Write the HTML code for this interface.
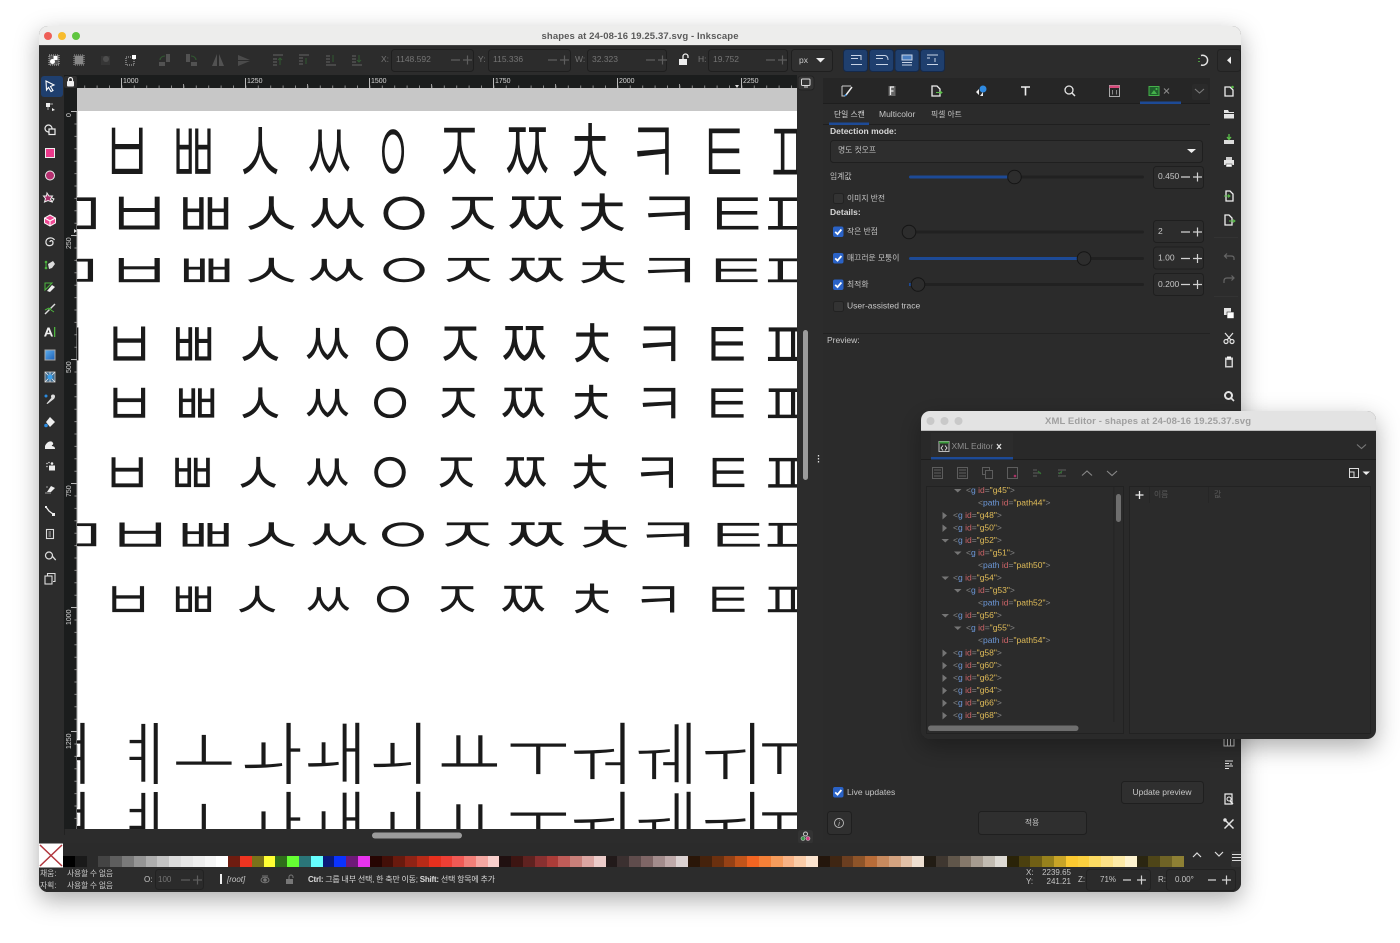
<!DOCTYPE html>
<html><head><meta charset="utf-8"><title>shapes at 24-08-16 19.25.37.svg - Inkscape</title>
<style>
html,body{margin:0;padding:0;background:#fff;width:1400px;height:943px;overflow:hidden}
svg{display:block;position:absolute;left:0;top:0;font-family:"Liberation Sans","Noto Sans CJK KR",sans-serif;font-size:8.5px;filter:blur(.25px)}
#pal{position:absolute;left:63px;top:856px;display:flex;height:11px}
#pal i{flex:none;width:11.8px;height:11px}
.t{fill:#c6c6c6}.d{fill:#757575}.b{font-weight:700}.h{fill:#d8d8d8}
.kr{font-size:7.8px}
.jm{font-family:"Noto Sans CJK KR",sans-serif;fill:#1a1a1a;text-anchor:middle;stroke:#fff;stroke-width:1px}
.k{fill:#858585}.g{fill:#6c97d6}.i{fill:#cc6468}.v{fill:#dfbb58}
.fld{fill:#2c2c2c;stroke:#1f1f1f;stroke-width:1}
.ln{fill:none;stroke:#dcdcdc;stroke-width:1.2}
.dm{fill:none;stroke:#7a7a7a;stroke-width:1.1}
.wf{fill:#e2e2e2}
</style></head><body>
<svg width="1400" height="943" viewBox="0 0 1400 943">
<defs>
<filter id="sh" x="-10%" y="-10%" width="120%" height="125%"><feDropShadow dx="0" dy="8" stdDeviation="12" flood-color="#000" flood-opacity=".32"/></filter>
<clipPath id="cv"><rect x="77" y="111" width="720" height="718"/></clipPath>
<clipPath id="win"><rect x="39" y="26" width="1202" height="866" rx="9"/></clipPath>
<clipPath id="xwin"><rect x="921" y="411" width="455" height="328" rx="9"/></clipPath>
<linearGradient id="gr" x1="0" y1="0" x2="1" y2="1"><stop offset="0" stop-color="#5fb0f0"/><stop offset="1" stop-color="#1c5fb5"/></linearGradient>
<g id="cb"><rect x="0" y="0" width="10.5" height="10.5" rx="2" fill="#2a62c6"/><path d="M2.2 5.4 4.5 7.6 8.4 3" fill="none" stroke="#fff" stroke-width="1.8"/></g>
<g id="ucb"><rect x=".5" y=".5" width="10" height="10" rx="2" fill="#333" stroke="#222"/></g>
<g id="pm"><path d="M0 0H9M12 0H21M16.5 -4.5V4.5" stroke="#d2d2d2" stroke-width="1.2" fill="none"/></g>
<g id="pms"><path d="M0 0H8M14 0H23M18.500 -4.500V4.500" stroke="#d2d2d2" stroke-width="1.2" fill="none"/></g>
<g id="pmd"><path d="M0 0H9M12 0H21M16.5 -4.5V4.5" stroke="#5e5e5e" stroke-width="1.2" fill="none"/></g>
</defs>

<!-- main window -->
<rect x="39" y="26" width="1202" height="866" rx="9" fill="#2c2c2c" filter="url(#sh)"/>
<g clip-path="url(#win)">
<rect x="39" y="26" width="1202" height="20" fill="#ededec"/>
<rect x="39" y="45" width="1202" height="1" fill="#444"/>
<rect x="39" y="46" width="1202" height="846" fill="#2c2c2c"/>
<circle cx="48" cy="36" r="4" fill="#ee5f57"/><circle cx="62" cy="36" r="4" fill="#f7bc2e"/><circle cx="76" cy="36" r="4" fill="#5fc53f"/>
<text x="640" y="39" text-anchor="middle" textLength="197" font-size="9.500" font-weight="700" fill="#5a5a5a">shapes at 24-08-16 19.25.37.svg - Inkscape</text>

<!-- top toolbar icons -->
<g transform="translate(54,60)"><rect x="-5" y="-5" width="10" height="10" fill="#555" stroke="#bbb" stroke-dasharray="1 1"/><rect x="-.5" y="-4" width="4" height="4" fill="#fff"/><circle cx="-1.500" cy="1.500" r="2.500" fill="#fff"/></g>
<g transform="translate(79,60)"><rect x="-5" y="-5" width="10" height="10" fill="#444" stroke="#999" stroke-dasharray="1 1"/><path d="M-4-3H4M-4-1H4M-4 1H4M-4 3H4" stroke="#ccc"/></g>
<g transform="translate(105,60)" opacity=".45"><rect x="-4" y="-4" width="9" height="9" fill="#444"/><circle cx="1" cy="-1" r="3" fill="#777"/></g>
<g transform="translate(131,60)"><rect x="-5" y="-3" width="8" height="8" fill="none" stroke="#bbb" stroke-dasharray="1 1"/><rect x="1" y="-5" width="4" height="4" fill="#fff"/></g>
<g opacity=".42">
<g transform="translate(165,60)"><rect x="1" y="-6" width="4" height="8" fill="#888"/><rect x="-6" y="2" width="6" height="4" fill="#888"/><path d="M0-4C-3-4-5-2-5 0" class="dm" style="stroke:#3a9a3a"/></g>
<g transform="translate(191,60)"><rect x="-5" y="-6" width="4" height="8" fill="#888"/><rect x="0" y="2" width="6" height="4" fill="#888"/><path d="M0-4C3-4 5-2 5 0" class="dm" style="stroke:#3a9a3a"/></g>
<g transform="translate(218,60)"><path d="M-1-6V6L-6 6ZM1-6V6L6 6Z" fill="#888"/></g>
<g transform="translate(244,60)"><path d="M-6-5 6 0H-6ZM-6 1 6 1-6 6Z" fill="#777"/></g>
<g transform="translate(278,60)"><path d="M-5-5H5M-5 -1H-1M-5 2H-1M-5 5H-1" stroke="#999" stroke-width="1.2"/><path d="M2 5V-2M0 0 2-2 4 0" stroke="#3a9a3a" fill="none"/></g>
<g transform="translate(304,60)"><path d="M-5-2H-1M-5 1H-1M-5 4H-1M-5-5H5" stroke="#999" stroke-width="1.2"/><path d="M2 4V-2" stroke="#3a9a3a"/></g>
<g transform="translate(331,60)"><path d="M-5-4H-1M-5-1H-1M-5 2H-1M-5 5H5" stroke="#999" stroke-width="1.2"/><path d="M2-5V2" stroke="#3a9a3a"/></g>
<g transform="translate(357,60)"><path d="M-5-4H-1M-5-1H-1M-5 2H-1M-5 5H5" stroke="#999" stroke-width="1.2"/><path d="M2-5V2M0 0 2 2 4 0" stroke="#3a9a3a" fill="none"/></g>
</g>
<!-- fields -->
<text x="381" y="62" class="d">X:</text><rect class="fld" x="391.500" y="49.500" width="82" height="22" rx="3"/><text x="396" y="62" class="d">1148.592</text><use href="#pmd" x="451" y="60"/>
<text x="478" y="62" class="d">Y:</text><rect class="fld" x="488.500" y="49.500" width="82" height="22" rx="3"/><text x="493" y="62" class="d">115.336</text><use href="#pmd" x="548" y="60"/>
<text x="575" y="62" class="d">W:</text><rect class="fld" x="587.500" y="49.500" width="79" height="22" rx="3"/><text x="592" y="62" class="d">32.323</text><use href="#pmd" x="646" y="60"/>
<g transform="translate(683,60)"><rect x="-4" y="-1" width="8" height="6" fill="#eee"/><path d="M0-1V-3.500A2.500 2.500 0 0 1 5-3.500V-2" fill="none" stroke="#eee" stroke-width="1.300"/></g>
<text x="698" y="62" class="d">H:</text><rect class="fld" x="708.500" y="49.500" width="79" height="22" rx="3"/><text x="713" y="62" class="d">19.752</text><use href="#pmd" x="766" y="60"/>
<rect x="791.500" y="49.500" width="41" height="22" rx="3" fill="#2f2f2f" stroke="#1f1f1f"/><text x="799" y="63" fill="#ccc">px</text><path d="M816 58H825L820.500 62.500Z" fill="#eee"/>
<!-- blue buttons -->
<g fill="#1f3f6e" stroke="#15294a"><rect x="843.500" y="49.500" width="24" height="22" rx="3"/><rect x="869.500" y="49.500" width="24" height="22" rx="3"/><rect x="895" y="49.500" width="24" height="22" rx="3"/><rect x="920.500" y="49.500" width="24" height="22" rx="3"/></g>
<g fill="none" stroke="#c8d4e6" stroke-width="1">
<path d="M851 55.500H861V60M851 58.500H858M851 64.500H862"/><path d="M876 55.500H885Q888 56 888 60M876 58.500H883M876 64.500H888"/>
<rect x="902" y="55" width="10" height="5" fill="#4a7ec0" stroke="#c8d4e6"/><path d="M902 62.500H912M902 65H912"/>
<path d="M927 55H938M927 58H930M935 58V62M927 64.500H938"/></g>
<!-- snap + arrow -->
<path d="M1201 55.500A5 5 0 1 1 1201 65" fill="none" stroke="#e4e4e4" stroke-width="1.500"/><path d="M1199 58V59M1199 61V62" stroke="#5bbf4a" stroke-width="1.500"/>
<rect x="1217.500" y="49.500" width="23" height="22" fill="#2c2c2c" stroke="#222" rx="3"/><path d="M1231 56.500V64L1227 60.200Z" fill="#eee"/>

<!-- left toolbar -->
<rect x="41" y="76" width="22" height="21" rx="3" fill="#1f3f6e"/>
<path d="M46 81 54 85 50.500 86.500 53 90.500 51 91.500 48.500 87.500 46.500 90Z" fill="#1f3f6e" stroke="#fff" stroke-width="1.100"/>
<g transform="translate(50,107)"><rect x="-4" y="-4" width="4" height="4" fill="#eee"/><path d="M0-3H3M-2 0V3" stroke="#aaa"/><path d="M2 1 5 3 2 4Z" fill="#eee"/></g>
<g transform="translate(50,130)"><circle cx="-1.500" cy="-1.500" r="3.500" fill="none" stroke="#eee" stroke-width="1.200"/><rect x="-1" y="-1" width="6" height="5.500" fill="#2c2c2c" stroke="#eee" stroke-width="1.200"/></g>
<rect x="45.500" y="148.500" width="9" height="9" fill="#ec3a8c" stroke="#eee"/>
<circle cx="50" cy="175.500" r="4.500" fill="#b63070" stroke="#eee"/>
<path d="M47 193 49 196 52.500 196 50.500 199 52 202 48 200.500 44.500 202 45.500 198.500 43.500 196 46.500 196Z" fill="#a8306a" stroke="#eee"/><path d="M52 198 54 199 52 202" fill="none" stroke="#eee"/>
<path d="M50 215 55.500 218V223L50 226 44.500 223V218Z" fill="#f04a95" stroke="#f5f5f5"/><path d="M44.500 218 50 221 55.500 218M50 221V226" stroke="#fff" fill="none"/>
<path d="M50 242C50 240 53 240 53 243C53 246 47 247 46 243C45 238 52 236 54.500 240" fill="none" stroke="#e4e4e4" stroke-width="1.300"/>
<g transform="translate(50,265)"><path d="M-1 4-2-1 3-4 5-1 2 3Z" fill="#ddd"/><circle cx="-4" cy="-3" r="1.300" fill="#4db53e"/><circle cx="-4" cy="3" r="1.300" fill="#4db53e"/><path d="M-4-3V3" stroke="#4db53e"/></g>
<g transform="translate(50,287)"><path d="M-3 4 2-2 5 0 0 5Z" fill="#eee"/><path d="M-5-4H2L-5 3Z" fill="none" stroke="#4db53e"/></g>
<g transform="translate(50,309)"><path d="M-5 5 5-5" stroke="#ddd" stroke-width="1.400"/><path d="M-5 1-1-1M1 1 4 3" stroke="#4db53e"/><circle cx="0" cy="0" r="1.200" fill="#4db53e"/></g>
<g transform="translate(50,332)"><path d="M-6 4.500-2.500-4.500H-.5L3 4.500H1L.2 2.300H-3.100L-3.900 4.500ZM-2.500.8H-.5L-1.500-2.300Z" fill="#eee"/><rect x="4" y="-5" width="1.300" height="10" fill="#4db53e"/></g>
<rect x="45" y="350" width="10" height="10" fill="url(#gr)" stroke="#aaa"/>
<g transform="translate(50,377)"><rect x="-5" y="-5" width="10" height="10" fill="#3d6f96" stroke="#aaa"/><path d="M-5-5 5 5M5-5-5 5M0-5V5" stroke="#eee" stroke-width=".800"/><circle r="2.500" fill="#3aa0ee"/></g>
<g transform="translate(50,399.500)"><path d="M-3 5 3-2 5 0-2 5.500Z" fill="#ddd" transform="translate(-.5,-1)"/><circle cx="3" cy="-3" r="2" fill="#ddd"/><circle cx="-4" cy="-3.500" r="1.500" fill="#2b8be0"/></g>
<g transform="translate(50,422)"><path d="M0-5 5 0 0 5-4 0Z" fill="#eee"/><circle cx="-4" cy="3.500" r="1.800" fill="#2b8be0"/></g>
<path d="M45 449V446C47 441 52 440 53 443C54 445 51 445 52 446C53 446.500 55 446 55 449Z" fill="#eee"/>
<g transform="translate(50,466.500)"><rect x="-1" y="-1" width="6" height="5" fill="#eee"/><circle cx="-3" cy="-3" r=".8" fill="#ccc"/><circle cx="-1" cy="-4" r=".8" fill="#ccc"/><circle cx="-3" cy="0" r=".8" fill="#ccc"/><circle cx="2" cy="-3" r="1.300" fill="#eee"/></g>
<g transform="translate(50,489)"><path d="M-3 3 1-3 5-1 1 3Z" fill="#eee"/><path d="M-5 4H1" stroke="#777" stroke-width="1.500"/><circle cx="-3" cy="-2" r="1" fill="#777"/></g>
<g transform="translate(50,511)"><path d="M-4-4-1 0 3 3" fill="none" stroke="#eee" stroke-width="1.300"/><rect x="-5" y="-5" width="2" height="2" fill="#eee"/><rect x="2" y="2" width="3" height="3" fill="#eee"/></g>
<g transform="translate(50,534)"><rect x="-3.500" y="-4.500" width="7" height="9" fill="none" stroke="#ddd" stroke-width="1.100"/><path d="M-1.500-2H1M-1.500 0H1M-1.500 2H1" stroke="#ddd" stroke-width=".8"/></g>
<g transform="translate(50,556.500)"><circle cx="-1" cy="-1" r="3.500" fill="none" stroke="#ddd" stroke-width="1.200"/><path d="M2-.5 5 4.500" transform="rotate(-10)" stroke="#ddd" stroke-width="1.300"/></g>
<g transform="translate(50,578.500)"><rect x="-5" y="-2.500" width="7" height="8" fill="#2c2c2c" stroke="#ddd" stroke-width="1.100"/><path d="M-2.500-3V-5H5V3H3" fill="none" stroke="#ddd" stroke-width="1.100"/></g>
<rect x="64" y="75" width="1" height="760" fill="#222"/>

<!-- rulers -->
<rect x="64" y="75" width="733" height="13" fill="#1b1d1d"/>
<rect x="64" y="88" width="13" height="741" fill="#1b1d1d"/>
<rect x="64" y="76" width="13" height="12" rx="2" fill="#2f2f2f"/>
<g transform="translate(70.500,82)"><rect x="-3.500" y="-1" width="7" height="5.500" rx="1" fill="#f0f0f0"/><path d="M-2-1V-2.500A2 2 0 0 1 2-2.500V-1" fill="none" stroke="#f0f0f0" stroke-width="1.200"/></g>
<path d="M84.200 86.700H797" stroke="#8a8a8a" stroke-width="2.500" stroke-dasharray="1 11.400"/>
<path d="M121.500 78V88M245.500 78V88M369.500 78V88M493.500 78V88M617.500 78V88M741.500 78V88" stroke="#bbb"/>
<path d="M183.500 84V88M307.500 84V88M431.500 84V88M555.500 84V88M679.500 84V88" stroke="#999"/>
<g font-size="7" fill="#d6d6d6"><text x="123" y="83">1000</text><text x="247" y="83">1250</text><text x="371" y="83">1500</text><text x="495" y="83">1750</text><text x="619" y="83">2000</text><text x="743" y="83">2250</text></g>
<path d="M735 85H739L737 88Z" fill="#ddd"/>
<path d="M75.700 123.500V829" stroke="#8a8a8a" stroke-width="2.500" stroke-dasharray="1 11.400"/>
<path d="M71 111.500H77M71 235.500H77M71 359.500H77M71 483.500H77M71 607.500H77M71 731.500H77" stroke="#bbb"/>
<g font-size="7" fill="#d6d6d6"><text transform="translate(71,117) rotate(-90)">0</text><text transform="translate(71,249) rotate(-90)">250</text><text transform="translate(71,373) rotate(-90)">500</text><text transform="translate(71,497) rotate(-90)">750</text><text transform="translate(71,625) rotate(-90)">1000</text><text transform="translate(71,749) rotate(-90)">1250</text></g>
<path d="M74 229 77 231 74 233Z" fill="#ddd"/>

<!-- canvas -->
<rect x="77" y="88" width="720" height="23" fill="#c7c7c7"/>
<rect x="77" y="111" width="720" height="718" fill="#fff"/>
<rect x="76.500" y="111" width="1" height="718" fill="#aaa"/>
<g clip-path="url(#cv)">
<g transform="translate(0,152) scale(1,1.720)"><text class="jm" style="stroke-width:1.100px" font-size="57" y="21" x="127 193 260 329 459 527 590 653 724 790">ㅂㅃㅅㅆㅈㅉㅊㅋㅌㅍ</text></g>
<g transform="translate(393,152) scale(1,2.300)"><text class="jm" style="stroke-width:.5px" font-size="40" y="15" x="0">ㅇ</text></g>
<g transform="translate(0,213) scale(1,.92)"><text class="jm" style="stroke-width:1.200px" font-size="75" y="28" x="75 139 205 271 337 404 472 536 602 669 737 790">ㅁㅂㅃㅅㅆㅇㅈㅉㅊㅋㅌㅍ</text></g>
<g transform="translate(0,270) scale(1,.67)"><text class="jm" style="stroke-width:.9px" font-size="75" y="28" x="72 139 206 271 336 404 468 536 603 669 736 790">ㅁㅂㅃㅅㅆㅇㅈㅉㅊㅋㅌㅍ</text></g>
<g transform="translate(0,345) scale(1,1.220)"><text class="jm" style="stroke-width:.6px" font-size="58" y="21" x="62 129 193 260 327 392 460 524 592 659 727 785">ㅁㅂㅃㅅㅆㅇㅈㅉㅊㅋㅌㅍ</text></g>
<g transform="translate(0,404) scale(1,1.080)"><text class="jm" style="stroke-width:.6px" font-size="58" y="21" x="60 129 196 260 327 390 458 523 591 659 727 785">ㅁㅂㅃㅅㅆㅇㅈㅉㅊㅋㅌㅍ</text></g>
<g transform="translate(0,473) scale(1,1.100)"><text class="jm" style="stroke-width:.6px" font-size="57" y="21" x="127 192 258 327 390 456 525 590 657 728 785">ㅂㅃㅅㅆㅇㅈㅉㅊㅋㅌㅍ</text></g>
<g transform="translate(0,535) scale(1,.66)"><text class="jm" style="stroke-width:.9px" font-size="76" y="28" x="75 140 205 271 339 403 467 536 605 668 738 790">ㅁㅂㅃㅅㅆㅇㅈㅉㅊㅋㅌㅍ</text></g>
<g transform="translate(0,600) scale(1,.93)"><text class="jm" style="stroke-width:.6px" font-size="58" y="21" x="60 128 193 257 328 393 457 523 592 658 728 785">ㅁㅂㅃㅅㅆㅇㅈㅉㅊㅋㅌㅍ</text></g>
<g transform="translate(0,753)"><text class="jm" style="stroke-width:1.500px" font-size="70" y="26" x="76 145 204 272 335 398 469 538 600 665 730 790">ㅕㅖㅗㅘㅙㅚㅛㅜㅝㅞㅟㅠ</text></g>
<g transform="translate(0,822)"><text class="jm" style="stroke-width:1.500px" font-size="70" y="26" x="76 145 204 272 335 398 469 538 600 665 730 790">ㅕㅖㅗㅘㅙㅚㅛㅜㅝㅞㅟㅠ</text></g>
</g>

<!-- scrollbars -->
<rect x="797" y="75" width="26" height="768" fill="#2c2c2c"/>
<rect x="798" y="76" width="16" height="14" rx="3" fill="#353535" stroke="#222"/><rect x="801.500" y="79" width="8.500" height="6.500" rx="1" fill="none" stroke="#ddd"/><path d="M804 87H808" stroke="#ddd"/>
<rect x="803" y="330" width="5" height="150" rx="2.500" fill="#9b9b9b"/>
<path d="M818.500 455V456.500M818.500 458V459.500M818.500 461V462.500" stroke="#ddd" stroke-width="1.300"/>
<rect x="77" y="829" width="746" height="14" fill="#2c2c2c"/>
<rect x="372" y="832.500" width="90" height="6" rx="3" fill="#9b9b9b"/>
<rect x="798" y="830" width="15" height="14" rx="3" fill="#333"/>
<circle cx="805.500" cy="834" r="2" fill="none" stroke="#ccc"/><circle cx="803" cy="838.500" r="2" fill="#3a9a4a" stroke="#ccc" stroke-width=".6"/><circle cx="808" cy="838.500" r="2" fill="#d63a80" stroke="#ccc" stroke-width=".6"/>

<!-- right panel -->
<rect x="823" y="78" width="387" height="762" fill="#2b2b2b"/>
<rect x="823" y="78" width="387" height="25" fill="#262626"/>
<rect x="823" y="103" width="387" height="1" fill="#1e1e1e"/>
<rect x="823" y="124" width="387" height="1" fill="#1f1f1f"/>
<rect x="823" y="333" width="387" height="1" fill="#222"/>
<rect x="1192" y="84" width="16" height="16" rx="2" fill="#2a2a2a"/>
<g transform="translate(847,91)"><path d="M-5-5H4M-5-5V5H-2" fill="none" stroke="#ccc"/><path d="M-1 4 5-4" stroke="#eee" stroke-width="1.500"/><path d="M-2 5-1 3.500" stroke="#3a8fe0" stroke-width="1.800"/></g>
<g transform="translate(892,91)"><rect x="-3.500" y="-5" width="7" height="10" fill="#666"/><path d="M-1.500 4V-4H2M-1.500 0H1.500" fill="none" stroke="#eee" stroke-width="1.300"/></g>
<g transform="translate(936,91)"><path d="M-4-5H1L4-2V5H-4Z" fill="#2b2b2b" stroke="#eee" stroke-width="1.300"/><path d="M0 1.500H6M4 0 6 1.500 4 3" stroke="#5bbf4a" fill="none"/></g>
<g transform="translate(981,91)"><circle cx="2" cy="-2" r="3.500" fill="#2f8ae0"/><path d="M-5 1-2-2V4ZM-1 5 2 1V5Z" fill="#eee"/></g>
<path d="M1021 87H1030M1025.500 87V95.500" stroke="#eee" stroke-width="1.600" fill="none"/>
<circle cx="1069" cy="90" r="4" fill="none" stroke="#e4e4e4" stroke-width="1.300"/><path d="M1072 93 1075 96" stroke="#e4e4e4" stroke-width="1.500"/>
<g transform="translate(1114.500,91)"><rect x="-5" y="-5.500" width="10" height="11" fill="none" stroke="#aaa"/><rect x="-5" y="-5.500" width="10" height="2.500" fill="#d8487a"/><path d="M-2-1V3.500M2-1V3.500" stroke="#888"/></g>
<g transform="translate(1154,91)"><rect x="-5" y="-4.500" width="10" height="9" fill="#1f5f2c" stroke="#45b04a"/><path d="M-3 3 0-1 3 3Z" fill="#45b04a"/><circle cx="2.500" cy="-2" r="1.100" fill="#45b04a"/></g>
<path d="M1164 88.500 1169 93.500M1169 88.500 1164 93.500" stroke="#8a8a8a" stroke-width="1.100"/>
<rect x="1140" y="101.500" width="41" height="2.500" fill="#1d4a96"/>
<path d="M1195 89 1199.500 93 1204 89" class="dm"/>

<text x="834" y="117" class="h kr">단일 스캔</text><text x="879" y="117" class="t">Multicolor</text><text x="931" y="117" class="t kr">픽셀 아트</text>
<rect x="829" y="122.500" width="40" height="2.500" fill="#1d4a96"/>
<text x="830" y="134" class="b h">Detection mode:</text>
<rect x="830.500" y="140.500" width="372" height="22" rx="3" fill="#2e2e2e" stroke="#1f1f1f"/>
<text x="838" y="152.500" class="t kr">명도 컷오프</text><path d="M1187 149H1196L1191.500 153Z" fill="#eee"/>

<text x="830" y="179" class="t kr">임계값</text>
<rect x="909" y="175.500" width="235" height="3" rx="1.500" fill="#212121"/><rect x="909" y="175.500" width="105" height="3" rx="1.500" fill="#1d4a96"/>
<circle cx="1014.500" cy="177" r="6.800" fill="#2d2d2d" stroke="#151515"/>
<rect class="fld" x="1153.500" y="166.500" width="50" height="22" rx="3"/><text x="1158" y="179" class="t">0.450</text><use href="#pm" x="1181" y="177"/>
<use href="#ucb" x="833" y="193"/><text x="847" y="201" class="t kr">이미지 반전</text>
<text x="830" y="215" class="b h">Details:</text>
<use href="#cb" x="833" y="226.500"/><text x="847" y="234" class="t kr">작은 반점</text>
<rect x="909" y="230.500" width="235" height="3" rx="1.500" fill="#212121"/><circle cx="909" cy="232" r="6.800" fill="#2d2d2d" stroke="#151515"/>
<rect class="fld" x="1153.500" y="220.500" width="50" height="22" rx="3"/><text x="1158" y="234" class="t">2</text><use href="#pm" x="1181" y="232"/>
<use href="#cb" x="833" y="253"/><text x="847" y="260.500" class="t kr">매끄러운 모퉁이</text>
<rect x="909" y="257" width="235" height="3" rx="1.500" fill="#212121"/><rect x="909" y="257" width="175" height="3" rx="1.500" fill="#1d4a96"/>
<circle cx="1084" cy="258.500" r="6.800" fill="#2d2d2d" stroke="#151515"/>
<rect class="fld" x="1153.500" y="247" width="50" height="22" rx="3"/><text x="1158" y="260.500" class="t">1.00</text><use href="#pm" x="1181" y="258.500"/>
<use href="#cb" x="833" y="279.500"/><text x="847" y="287" class="t kr">최적화</text>
<rect x="909" y="283" width="235" height="3" rx="1.500" fill="#212121"/><rect x="909" y="283" width="9" height="3" fill="#1d4a96"/>
<circle cx="918" cy="284.500" r="6.800" fill="#2d2d2d" stroke="#151515"/>
<rect class="fld" x="1153.500" y="273.500" width="50" height="22" rx="3"/><text x="1158" y="287" class="t">0.200</text><use href="#pm" x="1181" y="284.500"/>
<use href="#ucb" x="833" y="301"/><text x="847" y="308.500" class="t">User-assisted trace</text>
<text x="827" y="343" class="t">Preview:</text>
<use href="#cb" x="833" y="787"/><text x="847" y="795" class="t">Live updates</text>
<rect x="1121.500" y="781.500" width="82" height="22" rx="3" fill="#2f2f2f" stroke="#1f1f1f"/><text x="1162" y="795" text-anchor="middle" class="t">Update preview</text>
<rect x="827.500" y="811.500" width="24" height="23" rx="3" fill="#2f2f2f" stroke="#1f1f1f"/><circle cx="839" cy="823" r="4.500" fill="none" stroke="#bbb" stroke-width=".9"/><text x="839" y="826" text-anchor="middle" font-size="7" font-style="italic" fill="#ccc">i</text>
<rect x="978.500" y="811.500" width="108" height="23" rx="3" fill="#2f2f2f" stroke="#1f1f1f"/><text x="1032" y="825" text-anchor="middle" class="t kr">적용</text>

<!-- right command bar -->
<rect x="1210" y="76" width="31" height="767" fill="#2c2c2c"/>
<g transform="translate(1229,91)"><path d="M-4-4H1L4-1V5H-4Z" fill="#2c2c2c" stroke="#eee" stroke-width="1.300"/><circle cx="3.500" cy="-4" r="1.300" fill="#5bbf4a"/></g>
<g transform="translate(1229,114)"><path d="M-5-4H-1L0-2H5V-1H-5ZM-5 0H5V4.500H-5Z" fill="#e4e4e4"/></g>
<g transform="translate(1229,139)"><path d="M-5 1H5V5H-5Z" fill="#ddd"/><path d="M0-5V0M-2-2 0 .500 2-2" stroke="#5bbf4a" fill="none" stroke-width="1.300"/></g>
<g transform="translate(1229,162)"><rect x="-5" y="-2" width="10" height="5" fill="#e4e4e4"/><rect x="-3" y="-5" width="6" height="3" fill="#ccc"/><rect x="-3" y="2" width="6" height="3" fill="#fff" stroke="#2c2c2c" stroke-width=".5"/></g>
<g transform="translate(1229,196)"><path d="M-3-5H1L4-2V5H-3Z" fill="#2c2c2c" stroke="#eee" stroke-width="1.300"/><path d="M-5 0H1M-1-1.500 1 0-1 1.500" stroke="#5bbf4a" fill="none"/></g>
<g transform="translate(1229,220)"><path d="M-4-5H0L3-2V5H-4Z" fill="#2c2c2c" stroke="#eee" stroke-width="1.300"/><path d="M0 1H6M4-.5 6 1 4 2.500" stroke="#5bbf4a" fill="none"/></g>
<rect x="1214" y="237" width="24" height="1" fill="#333"/><rect x="1214" y="296" width="24" height="1" fill="#333"/>
<path d="M1225 256H1231Q1234 256 1234 258V260M1227 253.500 1224.500 256 1227 258.500" fill="none" stroke="#666" stroke-width="1.200"/>
<path d="M1233 278H1227Q1224 278 1224 281V283M1231.500 275.500 1234 278 1231.500 280.500" fill="none" stroke="#666" stroke-width="1.200"/>
<g transform="translate(1229,313)"><rect x="-5" y="-5" width="7" height="7" fill="#e4e4e4"/><rect x="-2" y="-1" width="7" height="6.500" fill="#fff" stroke="#2c2c2c" stroke-width=".6"/></g>
<g transform="translate(1229,338)" fill="none" stroke="#e4e4e4" stroke-width="1.200"><circle cx="-3" cy="3.500" r="2"/><circle cx="3" cy="3.500" r="2"/><path d="M-4-5 2 2M4-5-2 2"/></g>
<g transform="translate(1229,362)"><rect x="-4" y="-4.500" width="8" height="10" fill="#ccc"/><rect x="-2" y="-5.500" width="4" height="2" fill="#fff"/><rect x="-2.500" y="-2" width="5" height="6" fill="#3a3a3a"/></g>
<g transform="translate(1229,396)"><rect x="-5" y="-5" width="9" height="9" rx="4.500" fill="#e4e4e4"/><circle cx="-.5" cy="-.5" r="2.500" fill="#2c2c2c"/><path d="M2 2 5 5" stroke="#e4e4e4" stroke-width="1.600"/></g>
<path d="M1224 739V746H1234V739M1227.500 739V746M1230.500 739V746" fill="none" stroke="#bbb"/>
<g transform="translate(1229,765)" stroke="#e4e4e4" stroke-width="1.100"><path d="M-4-4H4M-4-1.500H0M-4 1H4M-4 3.500H0"/><path d="M2-2V0" stroke="#ccc"/></g>
<g transform="translate(1229,799)"><path d="M-4-5H3V5H-4Z" fill="#2c2c2c" stroke="#eee" stroke-width="1.200"/><circle cx="0" cy="0" r="2" fill="none" stroke="#eee"/><path d="M1 2 4 5" stroke="#eee" stroke-width="1.300"/></g>
<g transform="translate(1229,824)" stroke="#e4e4e4" stroke-width="1.500" fill="none"><path d="M-4.500-4.500 4.500 4.500M4.500-4.500-4.500 4.500"/><circle cx="-4" cy="-4" r="1"/></g>

<!-- palette -->
<rect x="39" y="843" width="1202" height="24" fill="#2b2b2b"/>
<rect x="39.500" y="844" width="23" height="23" fill="#fff" stroke="#fff"/>
<path d="M40 845 62 866M62 845 40 866" stroke="#b0353c" stroke-width="1.500"/>
<path d="M1193 857 1197 853 1201 857M1215 852 1219 856 1223 852" fill="none" stroke="#ddd" stroke-width="1.200"/>
<rect x="1231" y="851" width="10" height="16" rx="2" fill="#333"/><path d="M1232 854.500H1241M1232 857.500H1241M1232 860.500H1241" stroke="#ddd"/>

<!-- status bar -->
<text x="40" y="876" class="t kr">채움:</text><text x="67" y="876" class="t kr" textLength="46">사용할 수 없음</text>
<text x="40" y="888" class="t kr">자획:</text><text x="67" y="888" class="t kr" textLength="46">사용할 수 없음</text>
<text x="144" y="882" class="t" font-size="8">O:</text>
<rect x="155.500" y="869.500" width="48" height="20" rx="3" fill="#2b2b2b" stroke="#222"/>
<use href="#pmd" x="181" y="880"/>
<text x="158" y="882" class="d" font-size="8">100</text>
<rect x="220" y="874" width="2" height="10" fill="#eee"/>
<text x="227" y="882" class="t" font-size="8" font-style="italic">[root]</text>
<g transform="translate(265,880)" fill="none" stroke="#777"><ellipse rx="4" ry="2.800"/><circle r="1.300" fill="#777"/><path d="M-3-4 3-4"/></g>
<g transform="translate(290,880)"><rect x="-4" y="-1" width="7" height="5" fill="#777"/><path d="M-1-1V-3A2 2 0 0 1 3-3V-2" fill="none" stroke="#777"/></g>
<text x="308" y="882" class="h" font-size="8" textLength="187"><tspan class="b">Ctrl:</tspan> 그룹 내부 선택, 한 축만 이동; <tspan class="b">Shift:</tspan> 선택 항목에 추가</text>
<g font-size="8">
<text x="1026" y="875" class="t">X:</text><text x="1071" y="875" class="t" text-anchor="end">2239.65</text>
<text x="1026" y="884" class="t">Y:</text><text x="1071" y="884" class="t" text-anchor="end">241.21</text>
<text x="1078" y="882" class="t">Z:</text>
<text x="1158" y="882" class="t">R:</text>
</g>
<rect x="1086.500" y="869.500" width="64" height="21" rx="3" fill="#2b2b2b" stroke="#222"/><text x="1100" y="882" font-size="8" class="t">71%</text><use href="#pms" x="1123" y="880"/>
<rect x="1166.500" y="869.500" width="69" height="21" rx="3" fill="#2b2b2b" stroke="#222"/><text x="1175" y="882" font-size="8" class="t">0.00°</text><use href="#pms" x="1208" y="880"/>
</g>

<!-- XML editor window -->
<rect x="921" y="411" width="455" height="328" rx="9" fill="#2b2b2b" filter="url(#sh)"/>
<g clip-path="url(#xwin)">
<rect x="921" y="411" width="455" height="20" fill="#e3e3e3"/><rect x="921" y="430" width="455" height="1" fill="#bbb"/>
<circle cx="930.500" cy="421" r="4" fill="#c9c9c9"/><circle cx="944.500" cy="421" r="4" fill="#c9c9c9"/><circle cx="958.500" cy="421" r="4" fill="#c9c9c9"/>
<text x="1148" y="424" text-anchor="middle" textLength="206" font-size="9.500" font-weight="700" fill="#a0a0a0">XML Editor - shapes at 24-08-16 19.25.37.svg</text>
<rect x="921" y="431" width="455" height="28" fill="#292929"/>
<rect x="931" y="433" width="82" height="26" fill="#2c2c2c"/>
<rect x="921" y="459" width="455" height="1" fill="#1d1d1d"/>
<rect x="931" y="457" width="82" height="2.500" fill="#1d4a96"/>
<g transform="translate(944,446.500)"><rect x="-5" y="-5" width="10" height="10" fill="#2c2c2c" stroke="#bbb"/><rect x="-5" y="-5" width="10" height="2" fill="#3a9a3a"/><path d="M-1-1-3 1.500-1 4M1-1 3 1.500 1 4" fill="none" stroke="#ddd" stroke-width=".9"/></g>
<text x="951.500" y="449" style="fill:#8e8e8e">XML Editor</text>
<path d="M997 444 1001 449M1001 444 997 449" stroke="#ddd" stroke-width="1.300"/>
<path d="M1357 444.500 1361.500 448.500 1366 444.500" class="dm"/>
<g fill="none" stroke="#5d5d5d">
<rect x="932.500" y="467.500" width="10" height="11"/><path d="M934 470H941M934 473H941M934 476H941"/>
<rect x="957.500" y="467.500" width="10" height="11"/><path d="M959 470H966M959 473H966M959 476H966"/>
<rect x="982.500" y="467.500" width="7" height="7"/><rect x="985.500" y="470.500" width="7" height="8" fill="#2b2b2b"/>
<rect x="1007.500" y="467.500" width="10" height="11"/>
<path d="M1033 470H1037M1033 473H1041M1033 476H1037"/><path d="M1058 470H1066M1058 473H1062M1058 476H1066"/>
</g>
<path d="M1014 475 1016 477M1016 475 1014 477" stroke="#b03068" stroke-width="1.200"/>
<path d="M1038 471 1041 474M1059 474 1062 471" stroke="#2f7a2f"/>
<path d="M1082 475.500 1087 471 1092 475.500M1107 471 1112 475.500 1117 471" class="dm" style="stroke:#888"/>
<rect x="1349.500" y="468.500" width="9" height="9" fill="none" stroke="#ddd"/><path d="M1349 472H1354V478" stroke="#ddd" fill="none"/><path d="M1362.500 471.500H1370L1366.200 475Z" fill="#eee"/>
<!-- tree -->
<rect x="926.500" y="486.500" width="197" height="247" fill="#2b2b2b" stroke="#222"/>
<rect x="1129.500" y="486.500" width="241" height="247" fill="#2b2b2b" stroke="#222"/>
<rect x="1113.500" y="487" width=".8" height="235" fill="#222"/>
<g fill="#757575">
<path d="M954 489H961.500L957.750 492.500Z"/>
<path d="M942.500 512 947 515.500 942.500 519.500ZM942.500 524.500 947 528 942.500 532ZM942.500 649.500 947 653 942.500 657ZM942.500 662 947 665.500 942.500 669.500ZM942.500 674.500 947 678 942.500 682ZM942.500 687 947 690.500 942.500 694.500ZM942.500 699.500 947 703 942.500 707ZM942.500 712 947 715.500 942.500 719.500Z"/>
<path d="M941.500 539H949L945.250 542.500ZM941.500 576.500H949L945.250 580ZM941.500 614H949L945.250 617.500Z"/>
<path d="M954 551.500H961.500L957.750 555ZM954 589H961.500L957.750 592.500ZM954 626.500H961.500L957.750 630Z"/>
</g>
<text x="966" y="493"><tspan class="k">&lt;</tspan><tspan class="g">g</tspan> <tspan class="i">id</tspan><tspan class="k">=</tspan><tspan class="v">"g45"</tspan><tspan class="k">&gt;</tspan></text>
<text x="978" y="505.500"><tspan class="k">&lt;</tspan><tspan class="g">path</tspan> <tspan class="i">id</tspan><tspan class="k">=</tspan><tspan class="v">"path44"</tspan><tspan class="k">&gt;</tspan></text>
<text x="953" y="518"><tspan class="k">&lt;</tspan><tspan class="g">g</tspan> <tspan class="i">id</tspan><tspan class="k">=</tspan><tspan class="v">"g48"</tspan><tspan class="k">&gt;</tspan></text>
<text x="953" y="530.500"><tspan class="k">&lt;</tspan><tspan class="g">g</tspan> <tspan class="i">id</tspan><tspan class="k">=</tspan><tspan class="v">"g50"</tspan><tspan class="k">&gt;</tspan></text>
<text x="953" y="543"><tspan class="k">&lt;</tspan><tspan class="g">g</tspan> <tspan class="i">id</tspan><tspan class="k">=</tspan><tspan class="v">"g52"</tspan><tspan class="k">&gt;</tspan></text>
<text x="966" y="555.500"><tspan class="k">&lt;</tspan><tspan class="g">g</tspan> <tspan class="i">id</tspan><tspan class="k">=</tspan><tspan class="v">"g51"</tspan><tspan class="k">&gt;</tspan></text>
<text x="978" y="568"><tspan class="k">&lt;</tspan><tspan class="g">path</tspan> <tspan class="i">id</tspan><tspan class="k">=</tspan><tspan class="v">"path50"</tspan><tspan class="k">&gt;</tspan></text>
<text x="953" y="580.500"><tspan class="k">&lt;</tspan><tspan class="g">g</tspan> <tspan class="i">id</tspan><tspan class="k">=</tspan><tspan class="v">"g54"</tspan><tspan class="k">&gt;</tspan></text>
<text x="966" y="593"><tspan class="k">&lt;</tspan><tspan class="g">g</tspan> <tspan class="i">id</tspan><tspan class="k">=</tspan><tspan class="v">"g53"</tspan><tspan class="k">&gt;</tspan></text>
<text x="978" y="605.500"><tspan class="k">&lt;</tspan><tspan class="g">path</tspan> <tspan class="i">id</tspan><tspan class="k">=</tspan><tspan class="v">"path52"</tspan><tspan class="k">&gt;</tspan></text>
<text x="953" y="618"><tspan class="k">&lt;</tspan><tspan class="g">g</tspan> <tspan class="i">id</tspan><tspan class="k">=</tspan><tspan class="v">"g56"</tspan><tspan class="k">&gt;</tspan></text>
<text x="966" y="630.500"><tspan class="k">&lt;</tspan><tspan class="g">g</tspan> <tspan class="i">id</tspan><tspan class="k">=</tspan><tspan class="v">"g55"</tspan><tspan class="k">&gt;</tspan></text>
<text x="978" y="643"><tspan class="k">&lt;</tspan><tspan class="g">path</tspan> <tspan class="i">id</tspan><tspan class="k">=</tspan><tspan class="v">"path54"</tspan><tspan class="k">&gt;</tspan></text>
<text x="953" y="655.500"><tspan class="k">&lt;</tspan><tspan class="g">g</tspan> <tspan class="i">id</tspan><tspan class="k">=</tspan><tspan class="v">"g58"</tspan><tspan class="k">&gt;</tspan></text>
<text x="953" y="668"><tspan class="k">&lt;</tspan><tspan class="g">g</tspan> <tspan class="i">id</tspan><tspan class="k">=</tspan><tspan class="v">"g60"</tspan><tspan class="k">&gt;</tspan></text>
<text x="953" y="680.500"><tspan class="k">&lt;</tspan><tspan class="g">g</tspan> <tspan class="i">id</tspan><tspan class="k">=</tspan><tspan class="v">"g62"</tspan><tspan class="k">&gt;</tspan></text>
<text x="953" y="693"><tspan class="k">&lt;</tspan><tspan class="g">g</tspan> <tspan class="i">id</tspan><tspan class="k">=</tspan><tspan class="v">"g64"</tspan><tspan class="k">&gt;</tspan></text>
<text x="953" y="705.500"><tspan class="k">&lt;</tspan><tspan class="g">g</tspan> <tspan class="i">id</tspan><tspan class="k">=</tspan><tspan class="v">"g66"</tspan><tspan class="k">&gt;</tspan></text>
<text x="953" y="718"><tspan class="k">&lt;</tspan><tspan class="g">g</tspan> <tspan class="i">id</tspan><tspan class="k">=</tspan><tspan class="v">"g68"</tspan><tspan class="k">&gt;</tspan></text>
<rect x="1116" y="494" width="5" height="28" rx="2.500" fill="#6e6e6e"/>
<rect x="928" y="725.500" width="150.500" height="5.500" rx="2.700" fill="#6e6e6e"/>
<path d="M1139.500 491V499M1135.500 495H1143.500" stroke="#eee" stroke-width="1.300"/>
<text x="1154" y="497" class="kr" fill="#5a5a5a">이름</text><text x="1214" y="497" class="kr" fill="#5a5a5a">값</text>
<path d="M1149.500 487V503M1208.500 487V503" stroke="#262626"/>
</g>
</svg>
<div id="pal"><i style="background:#000"></i><i style="background:#1a1a1a"></i><i style="background:#2b2b2b"></i><i style="background:#444"></i><i style="background:#5e5e5e"></i><i style="background:#7a7a7a"></i><i style="background:#959595"></i><i style="background:#aeaeae"></i><i style="background:#c4c4c4"></i><i style="background:#dcdcdc"></i><i style="background:#e6e6e6"></i><i style="background:#eee"></i><i style="background:#f6f6f6"></i><i style="background:#fff"></i><i style="background:#6e1c10"></i><i style="background:#ee3420"></i><i style="background:#7a721a"></i><i style="background:#ff3"></i><i style="background:#2f6e1a"></i><i style="background:#6f3"></i><i style="background:#2a7578"></i><i style="background:#6ff"></i><i style="background:#0a1a7a"></i><i style="background:#0a33ff"></i><i style="background:#6e1a78"></i><i style="background:#e833ee"></i><i style="background:#260502"></i><i style="background:#430f08"></i><i style="background:#691a0e"></i><i style="background:#8f2315"></i><i style="background:#b82a17"></i><i style="background:#e8301e"></i><i style="background:#ee3f35"></i><i style="background:#f05a55"></i><i style="background:#f27f78"></i><i style="background:#f5a8a2"></i><i style="background:#f9d0cd"></i><i style="background:#201010"></i><i style="background:#3d1512"></i><i style="background:#5f2220"></i><i style="background:#893030"></i><i style="background:#ab3c38"></i><i style="background:#c05c58"></i><i style="background:#c9807a"></i><i style="background:#dca6a2"></i><i style="background:#ecccca"></i><i style="background:#221a1a"></i><i style="background:#3b3030"></i><i style="background:#5f4c4c"></i><i style="background:#7f6666"></i><i style="background:#a38c8c"></i><i style="background:#bfaaaa"></i><i style="background:#dcd2d2"></i><i style="background:#2a1608"></i><i style="background:#45220c"></i><i style="background:#6b300f"></i><i style="background:#964115"></i><i style="background:#c2541a"></i><i style="background:#f26522"></i><i style="background:#f48038"></i><i style="background:#f69c5c"></i><i style="background:#f8b386"></i><i style="background:#facca8"></i><i style="background:#fce4cf"></i><i style="background:#24160c"></i><i style="background:#3f2613"></i><i style="background:#6b3e20"></i><i style="background:#8e5429"></i><i style="background:#b86c38"></i><i style="background:#c88a5e"></i><i style="background:#d4a380"></i><i style="background:#e2c1a8"></i><i style="background:#efe0d2"></i><i style="background:#221c14"></i><i style="background:#3f3730"></i><i style="background:#60564a"></i><i style="background:#85786a"></i><i style="background:#a69c90"></i><i style="background:#c2bcb2"></i><i style="background:#dedbd5"></i><i style="background:#2a2308"></i><i style="background:#4b400f"></i><i style="background:#705f15"></i><i style="background:#97811c"></i><i style="background:#c8a427"></i><i style="background:#fbc931"></i><i style="background:#fbd03f"></i><i style="background:#fcdb63"></i><i style="background:#fce187"></i><i style="background:#fdeaa6"></i><i style="background:#fef3cf"></i><i style="background:#2b2611"></i><i style="background:#4e4518"></i><i style="background:#6f6326"></i><i style="background:#8e8034"></i></div>
</body></html>
